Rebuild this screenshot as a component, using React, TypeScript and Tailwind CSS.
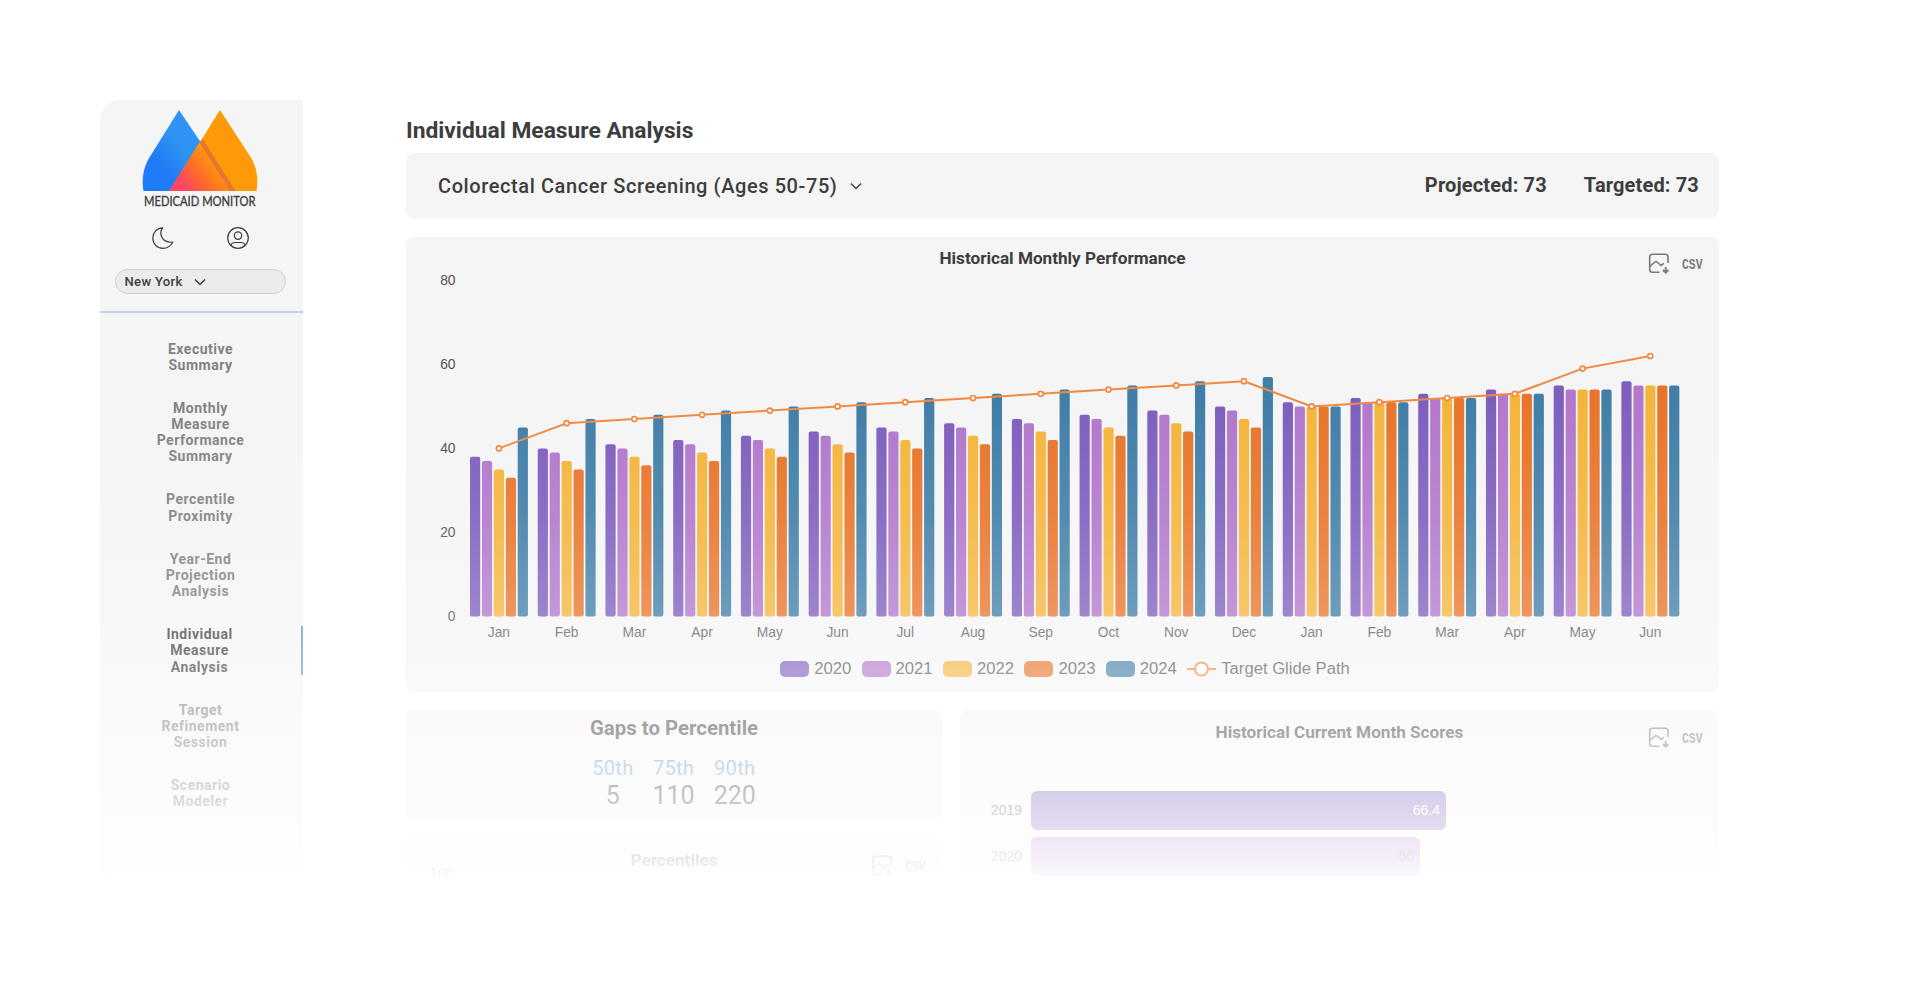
import React from "react";

const series = [
  { year: "2020", color: "#7f5fbe", data: [38, 40, 41, 42, 43, 44, 45, 46, 47, 48, 49, 50, 51, 52, 53, 54, 55, 56] },
  { year: "2021", color: "#b278cc", data: [37, 39, 40, 41, 42, 43, 44, 45, 46, 47, 48, 49, 50, 51, 52, 53, 54, 55] },
  { year: "2022", color: "#f4b53c", data: [35, 37, 38, 39, 40, 41, 42, 43, 44, 45, 46, 47, 50, 51, 52, 53, 54, 55] },
  { year: "2023", color: "#e8752a", data: [33, 35, 36, 37, 38, 39, 40, 41, 42, 43, 44, 45, 50, 51, 52, 53, 54, 55] },
  { year: "2024", color: "#417fa8", data: [45, 47, 48, 49, 50, 51, 52, 53, 54, 55, 56, 57, 50, 51, 52, 53, 54, 55] },
];
const target = [40, 46, 47, 48, 49, 50, 51, 52, 53, 54, 55, 56, 50, 51, 52, 53, 59, 62];
const months = [
  "Jan", "Feb", "Mar", "Apr", "May", "Jun", "Jul", "Aug", "Sep",
  "Oct", "Nov", "Dec", "Jan", "Feb", "Mar", "Apr", "May", "Jun",
];

const navItems = [
  { lines: ["Executive", "Summary"] },
  { lines: ["Monthly", "Measure", "Performance", "Summary"] },
  { lines: ["Percentile", "Proximity"] },
  { lines: ["Year-End", "Projection", "Analysis"] },
  { lines: ["Individual", "Measure", "Analysis"], active: true },
  { lines: ["Target", "Refinement", "Session"] },
  { lines: ["Scenario", "Modeler"] },
];

const gaps = [
  { label: "50th", value: 5 },
  { label: "75th", value: 110 },
  { label: "90th", value: 220 },
];

const Logo = () => (
  <svg width="118" height="101" viewBox="141.500 109 118 101" className="overflow-visible">
    <defs>
      <linearGradient id="blue" x1="0.2" y1="0.8" x2="0.7" y2="0.4">
        <stop offset="0.1" stopColor="#1f7bf8" />
        <stop offset="0.6" stopColor="#2f93f3" />
      </linearGradient>
      <linearGradient id="overlap" x1="0.1" y1="0.9" x2="0.75" y2="0.5">
        <stop offset="0.15" stopColor="#ff4560" />
        <stop offset="0.55" stopColor="#ff6a2b" />
        <stop offset="1" stopColor="#ff960c" />
      </linearGradient>
    </defs>
    <path d="M179.500 110 L234 191 H144 C142 180 143.500 169 149 159 Z" fill="url(#blue)" />
    <path d="M220.500 110 L251 157 C257.500 168 259 179 257 191 H170 Z" fill="#fe9a07" />
    <path d="M200.500 141.500 L169.500 191 H234 Z" fill="url(#overlap)" />
    <path d="M203 138.500 L236 191 H230.500 L200 142.800 Z" fill="#e5772f" />
    <text
      x="144.500"
      y="205.500"
      textLength="111.500"
      lengthAdjust="spacingAndGlyphs"
      fontSize="12.8"
      fill="#3d3d3d"
      stroke="#3d3d3d"
      strokeWidth="0.350"
      className="font-['Lato',sans-serif]"
    >
      MEDICAID MONITOR
    </text>
  </svg>
);

const MoonIcon = () => (
  <svg width="22" height="22" viewBox="0 0 22 22" fill="none" stroke="#3d3d3d" strokeWidth="1.2" strokeLinejoin="round">
    <path d="M10.800 0.900 C7 5.500 8.500 16 20.800 15.200 C18.500 19.300 14.800 21.300 11 21.300 C5 21.300 0.800 16.800 0.800 11 C0.800 5.400 5 0.900 10.800 0.900 Z" />
  </svg>
);

const UserIcon = () => (
  <svg width="22" height="22" viewBox="0 0 22 22" fill="none" stroke="#3d3d3d" strokeWidth="1.2">
    <circle cx="11" cy="11" r="10.300" />
    <circle cx="11" cy="8.600" r="3.700" />
    <path d="M4 18.500 C4.300 16 6 15.500 8 15.500 H14 C16 15.500 17.700 16 18 18.500" />
  </svg>
);

const Chevron = ({ className }: { className: string }) => (
  <svg width="12" height="8" viewBox="0 0 12 8" fill="none" stroke="currentColor" className={className}>
    <path d="M1 1.500 L6 6.500 L11 1.500" />
  </svg>
);

const ChartActions = () => (
  <div className="flex items-center gap-3 text-[#7a7a7a]">
    <svg width="21" height="21" viewBox="0 0 21 21" fill="none" stroke="currentColor" strokeWidth="1.600">
      <path d="M20 10 V4 Q20 1.200 17.200 1.200 H4.500 Q1.700 1.200 1.700 4 V16.500 Q1.700 19.200 4.500 19.200 H11.500" />
      <path d="M1.700 13.500 L7 9 Q8 8.200 9 9 L13 12.500 L15.800 10.300" strokeLinejoin="round" />
      <path d="M17.700 14 V19 M15 17 L17.700 19.600 L20.400 17" strokeWidth="1.900" />
    </svg>
    <svg width="22" height="19" viewBox="0 0 22 19" className="overflow-visible">
      <text
        x="1"
        y="14.500"
        textLength="20.500"
        lengthAdjust="spacingAndGlyphs"
        fontSize="15"
        fontWeight="700"
        fill="currentColor"
        className="font-['Liberation_Mono',monospace]"
      >
        CSV
      </text>
    </svg>
  </div>
);

const Sidebar = () => (
  <aside className="flex h-full w-[203px] flex-col items-center rounded-tl-[20px] bg-[#f5f5f5] pt-[9px]">
    <div className="flex flex-col items-center pr-[3px]">
      <Logo />
      <div className="mt-[17px] flex gap-[53px]">
        <MoonIcon />
        <UserIcon />
      </div>
      <div className="mt-5 flex h-[25px] w-[171px] items-center gap-[11px] rounded-full border border-[#d0d0d0] bg-[#ebebeb] pl-[9px] text-[13px] font-medium tracking-[0.350px] text-[#3d3d3d]">
        New York
        <Chevron className="stroke-[1.5]" />
      </div>
    </div>
    <div className="mt-[17px] h-[1.5px] w-full shrink-0 bg-[#c3d2e6]" />
    <nav className="mt-7 flex w-full flex-col gap-[27px] text-center text-[14px] leading-[16.150px] font-bold tracking-[0.5px]">
      {navItems.map((item) => (
        <div
          key={item.lines[0]}
          className={
            item.active
              ? "border-r-2 border-[#6298c4] pr-[2px] text-[#3d3d3d]"
              : "pr-[2px] text-[#828282]"
          }
        >
          {item.lines.map((line) => (
            <div key={line}>{line}</div>
          ))}
        </div>
      ))}
    </nav>
  </aside>
);

const PerformanceChart = () => {
  const baseline = 343.4;
  const unit = 4.2;
  const centerX = (i: number) => 92.9 + i * 67.73;
  const y = (value: number) => baseline - value * unit;

  return (
    <svg width="1313" height="372" viewBox="0 0 1313 372" className="font-['Liberation_Sans',sans-serif] text-[13.800px]">
      {[0, 20, 40, 60, 80].map((tick) => (
        <text key={tick} x="49.500" y={y(tick) + 5} textAnchor="end" fill="#505050">
          {tick}
        </text>
      ))}
      {months.map((month, i) => (
        <g key={i}>
          {series.map((s, j) => (
            <rect
              key={s.year}
              x={centerX(i) - 28.900 + j * 11.930}
              y={y(s.data[i])}
              width="10.200"
              height={s.data[i] * unit}
              rx="2"
              fill={s.color}
            />
          ))}
          <text x={centerX(i)} y="364" textAnchor="middle" fill="#5a5a5a">
            {month}
          </text>
        </g>
      ))}
      <polyline
        points={target.map((t, i) => `${centerX(i)},${y(t)}`).join(" ")}
        fill="none"
        stroke="#f08a42"
        strokeWidth="2"
      />
      {target.map((t, i) => (
        <circle key={i} cx={centerX(i)} cy={y(t)} r="2.500" fill="#fff" stroke="#f08a42" strokeWidth="1.700" />
      ))}
    </svg>
  );
};

const Legend = () => (
  <div className="mt-4 flex h-4 items-center justify-center gap-[10.400px] pl-[5px] font-['Liberation_Sans',sans-serif] text-[16.650px] text-[#555]">
    {series.map((s) => (
      <div key={s.year} className="flex items-center gap-[5px]">
        <div className="h-4 w-[29px] rounded-[5px]" style={{ background: s.color }} />
        {s.year}
      </div>
    ))}
    <div className="flex items-center gap-[5px]">
      <svg width="29" height="16" viewBox="0 0 29 16" stroke="#f08a42" strokeWidth="2">
        <path d="M0 8 H29" />
        <circle cx="14.500" cy="8" r="6.500" fill="#fff" />
      </svg>
      Target Glide Path
    </div>
  </div>
);

const CardHeader = ({ title, className }: { title: string; className: string }) => (
  <div className={`grid grid-cols-[1fr_auto_1fr] items-start pr-4 pl-4 ${className}`}>
    <div />
    <h2 className="text-[17.150px] leading-5 font-bold text-[#3d3d3d]">{title}</h2>
    <div className="flex justify-end pt-[5px]">
      <ChartActions />
    </div>
  </div>
);

const GapsCard = () => (
  <section className="flex h-[110px] flex-col items-center rounded-lg bg-[#f5f5f5] pt-[6px] text-[#3d3d3d]">
    <h2 className="text-[20.400px] leading-6 font-bold">Gaps to Percentile</h2>
    <div className="mt-[14px] flex gap-[19px]">
      {gaps.map((gap) => (
        <div key={gap.label} className="flex flex-col items-center">
          <span className="text-[20px] leading-7 tracking-[0.3px] text-[#6b9fce]">{gap.label}</span>
          <span className="text-[25px] leading-7">{gap.value}</span>
        </div>
      ))}
    </div>
  </section>
);

const ScoreRow = ({ year, bar, children }: { year: string; bar: string; children: React.ReactNode }) => (
  <div className="flex items-center gap-[9px]">
    <span className="w-[34px] text-right text-[#505050]">{year}</span>
    <div className={`flex h-[39px] items-center justify-end rounded-md pr-[6px] ${bar}`}>{children}</div>
  </div>
);

export default function App() {
  return (
    <div className="h-[1000px] w-[1920px] bg-white p-[100px] font-['Roboto',sans-serif]">
      <div className="relative flex h-[782px] w-[1720px] overflow-hidden rounded-[20px]">
        <Sidebar />

        <main className="ml-[103px] flex w-[1313px] shrink-0 flex-col">
          <h1 className="mt-[15px] text-[22.800px] leading-8 font-bold text-[#3d3d3d]">
            Individual Measure Analysis
          </h1>

          <div className="mt-[6px] flex h-[65px] shrink-0 items-center justify-between rounded-lg bg-[#f5f5f5] pr-5 pl-8 text-[20px] text-[#3d3d3d]">
            <div className="flex items-center gap-[13px] font-medium tracking-[0.590px]">
              Colorectal Cancer Screening (Ages 50-75)
              <Chevron className="stroke-[1.4]" />
            </div>
            <div className="flex gap-[37px] pb-0.5 font-bold tracking-[0.150px]">
              <span>Projected: 73</span>
              <span>Targeted: 73</span>
            </div>
          </div>

          <section className="mt-[19px] h-[455px] shrink-0 rounded-lg bg-[#f5f5f5]">
            <CardHeader title="Historical Monthly Performance" className="h-9 pt-[11px]" />
            <PerformanceChart />
            <Legend />
          </section>

          <div className="mt-[18px] flex gap-[18px]">
            <div className="flex w-[536px] flex-col gap-[18px]">
              <GapsCard />
              <section className="h-[200px] rounded-lg bg-[#f5f5f5]">
                <CardHeader title="Percentiles" className="h-[27px] pt-[12px]" />
                <div className="pt-px pl-6 font-['Liberation_Sans',sans-serif] text-[13.800px] leading-4 text-[#505050]">
                  100
                </div>
              </section>
            </div>

            <section className="h-[400px] w-[759px] rounded-lg bg-[#f5f5f5]">
              <CardHeader title="Historical Current Month Scores" className="h-[81px] pt-[12px]" />
              <div className="flex flex-col gap-[7px] pl-7 font-['Liberation_Sans',sans-serif] text-[14px]">
                <ScoreRow year="2019" bar="w-[415px] bg-[#7f5fbe] text-white">
                  66.4
                </ScoreRow>
                <ScoreRow year="2020" bar="w-[389px] bg-[#b278cc] text-[#505050]">
                  66
                </ScoreRow>
              </div>
            </section>
          </div>
        </main>

        {/* page fades out towards the bottom */}
        <div className="pointer-events-none absolute inset-0 bg-[linear-gradient(to_bottom,rgba(255,255,255,0)_300px,rgba(255,255,255,0.1)_420px,rgba(255,255,255,0.22)_505px,rgba(255,255,255,0.36)_565px,rgba(255,255,255,0.53)_627px,rgba(255,255,255,0.69)_692px,rgba(255,255,255,0.83)_745px,rgba(255,255,255,0.91)_767px,rgba(255,255,255,0.96)_776px,rgba(255,255,255,1)_779px)]" />
      </div>
    </div>
  );
}
